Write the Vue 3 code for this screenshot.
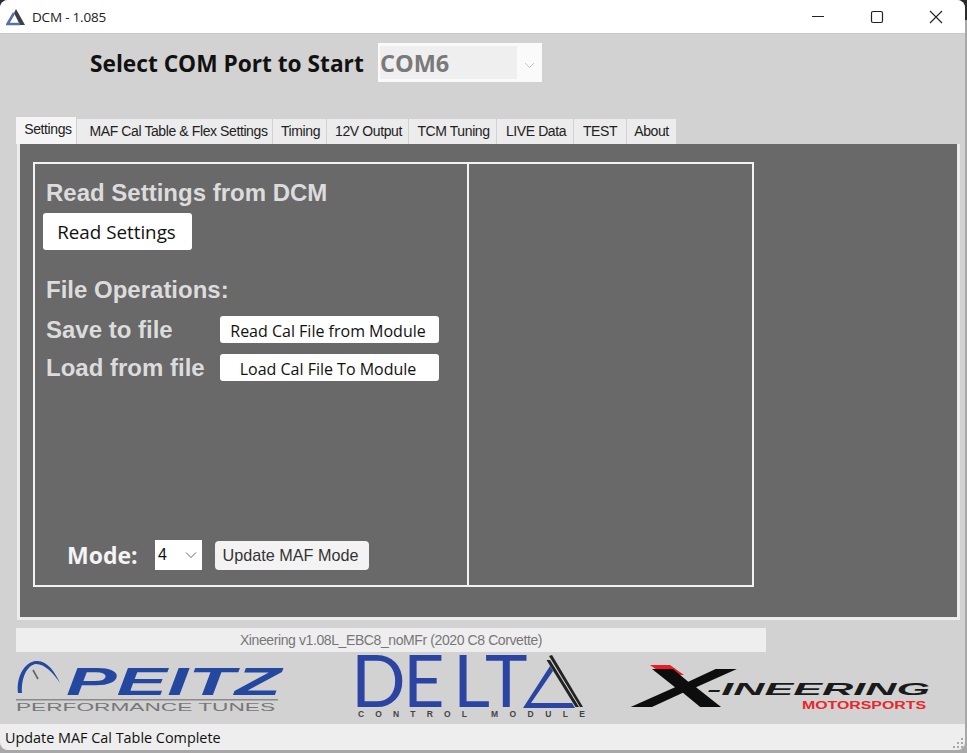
<template>
  <div class="window">
    <header class="titlebar">
      <svg class="app-icon" width="20" height="18" viewBox="0 0 20 18">
        <polygon points="10,1 19,17 14,17 8,5" fill="#3c3f46" />
        <path d="M8 5 L1.5 16 H14" fill="none" stroke="#5a6ea8" stroke-width="2.6" />
      </svg>
      <span class="app-title">DCM - 1.085</span>
      <div class="controls">
        <svg width="46" height="34" viewBox="0 0 46 34"><path d="M17 16.5 H29" stroke="#222" stroke-width="1" /></svg>
        <svg width="46" height="34" viewBox="0 0 46 34"><rect x="17.5" y="11.5" width="11" height="11" rx="1.5" fill="none" stroke="#222" stroke-width="1.2" /></svg>
        <svg width="46" height="34" viewBox="0 0 46 34"><path d="M17 11 L29 23 M29 11 L17 23" stroke="#222" stroke-width="1.1" /></svg>
      </div>
    </header>

    <main class="client">
      <div class="port-row">
        <span class="port-label">Select COM Port to Start</span>
        <div class="combo">
          <span class="combo-value">COM6</span>
          <svg width="24" height="38" viewBox="0 0 24 38"><path d="M8 19 L12.5 23.5 L17 19" fill="none" stroke="#c4c4c4" stroke-width="1" /></svg>
        </div>
      </div>

      <nav class="tabs">
        <span
          v-for="tab in tabs"
          :key="tab.name"
          class="tab"
          :class="{ active: tab.name === 'Settings' }"
          :style="{ width: tab.width + 'px', paddingLeft: tab.pad + 'px' }"
        >{{ tab.name }}</span>
      </nav>

      <section class="panel">
        <div class="group">
          <div class="group-left">
            <h2 class="heading first">Read Settings from DCM</h2>
            <button class="btn-read">Read Settings</button>
            <h2 class="heading ops">File Operations:</h2>
            <div class="file-row row-save">
              <span class="heading file-label">Save to file</span>
              <button class="btn-file">Read Cal File from Module</button>
            </div>
            <div class="file-row row-load">
              <span class="heading file-label">Load from file</span>
              <button class="btn-file">Load Cal File To Module</button>
            </div>
            <div class="mode-row">
              <span class="mode-label">Mode:</span>
              <div class="mode-select">
                <span>4</span>
                <svg width="14" height="10" viewBox="0 0 14 10"><path d="M2 2.5 L7 7.5 L12 2.5" fill="none" stroke="#666" stroke-width="1" /></svg>
              </div>
              <button class="btn-mode">Update MAF Mode</button>
            </div>
          </div>
          <div class="group-right"></div>
        </div>
      </section>

      <div class="version">Xineering v1.08L_EBC8_noMFr (2020 C8 Corvette)</div>

      <div class="logos">
        <svg class="logo-peitz" width="272" height="60" viewBox="0 0 272 60">
          <path d="M3 37 C1 20 10 6 21 5 C32 4 40 16 45 27 C38 17 30 8 21 8 C12 9 6 22 7 37 Z" fill="#24479f" />
          <path d="M18 14 L23 23" stroke="#5b6474" stroke-width="1.6" />
          <text x="51" y="39" class="peitz-name" textLength="215" lengthAdjust="spacingAndGlyphs">PEITZ</text>
          <rect x="1" y="43" width="262" height="1.5" fill="#8a8a8a" />
          <text x="1" y="55" class="peitz-sub" textLength="259" lengthAdjust="spacingAndGlyphs">PERFORMANCE TUNES</text>
        </svg>
        <svg class="logo-delta" width="232" height="66" viewBox="0 0 232 66">
          <text y="52" class="delta-name" x="-4 48 98 130">DELT</text>
          <polygon points="168,53 195,11 198,16 176,48 217,48 220,53" fill="#2b44a2" />
          <polygon points="191.5,5 195,5 224,52 220.5,52" fill="#222" />
          <polygon points="194,1 197,0 228,52 225,52" fill="#222" />
          <text x="3" y="62" class="delta-sub" textLength="109">CONTROL</text>
          <text x="136" y="62" class="delta-sub" textLength="94">MODULE</text>
        </svg>
        <svg class="logo-xin" width="302" height="60" viewBox="0 0 302 60">
          <polygon points="20,3 40,3 54,13 34,13" fill="#ee1c25" />
          <text x="7" y="45" class="xin-x" textLength="93" lengthAdjust="spacingAndGlyphs">X</text>
          <text x="77" y="33" class="xin-name" textLength="223" lengthAdjust="spacingAndGlyphs">-INEERING</text>
          <text x="172" y="47" class="xin-sub" textLength="124" lengthAdjust="spacingAndGlyphs">MOTORSPORTS</text>
        </svg>
      </div>
    </main>

    <footer class="status">
      <span>Update MAF Cal Table Complete</span>
      <svg class="grip" width="14" height="14" viewBox="0 0 14 14" fill="#a8a8a8">
        <rect x="10" y="2" width="2" height="2" /><rect x="6" y="6" width="2" height="2" /><rect x="10" y="6" width="2" height="2" />
        <rect x="2" y="10" width="2" height="2" /><rect x="6" y="10" width="2" height="2" /><rect x="10" y="10" width="2" height="2" />
      </svg>
    </footer>
  </div>
</template>

<script setup>
const tabs = [
  { name: "Settings", width: 60, pad: 4 },
  { name: "MAF Cal Table & Flex Settings", width: 195, pad: 8 },
  { name: "Timing", width: 53, pad: 2 },
  { name: "12V Output", width: 81, pad: 2 },
  { name: "TCM Tuning", width: 87, pad: 2 },
  { name: "LIVE Data", width: 76, pad: 2 },
  { name: "TEST", width: 52, pad: 0 },
  { name: "About", width: 49, pad: 0 },
];
</script>

<style>
html,
body {
  margin: 0;
  background: linear-gradient(#2a2a2a 0 20px, #a8a8a8 20px);
  height: 753px;
  overflow: hidden;
}
</style>

<style scoped>
* {
  box-sizing: border-box;
}

.window {
  width: 965px;
  height: 750px;
  display: flex;
  flex-direction: column;
  border-radius: 8px;
  overflow: hidden;
  background: #d2d2d2;
  font-family: "Open Sans", "Noto Sans", sans-serif;
}

.titlebar {
  height: 34px;
  flex: none;
  display: flex;
  align-items: center;
  padding-left: 6px;
  background: #fff;
  border-bottom: 1px solid #c8c8c8;
}

.app-icon {
  margin-right: 6px;
}

.app-title {
  font-size: 13.5px;
  letter-spacing: -0.2px;
  color: #222;
}

.controls {
  margin-left: auto;
  display: flex;
  margin-right: 6px;
  gap: 13px;
}

.client {
  flex: 1;
  display: flex;
  flex-direction: column;
  min-height: 0;
}

.port-row {
  height: 39px;
  margin-top: 9px;
  display: flex;
  align-items: center;
  padding-left: 90px;
}

.port-label {
  width: 288px;
  padding-top: 2px;
  font-size: 22.7px;
  font-weight: 700;
  color: #111;
  white-space: nowrap;
}

.combo {
  width: 164px;
  height: 39px;
  background: #fafafa;
  padding: 3px 0 3px 2px;
  display: flex;
  align-items: center;
}

.combo-value {
  width: 137px;
  height: 33px;
  background: #efefef;
  color: #7a7a7a;
  font-size: 23.5px;
  font-weight: 700;
  line-height: 34px;
}

.tabs {
  margin: 33px 0 0 16px;
  height: 29px;
  display: flex;
  align-items: flex-end;
  gap: 1px;
}

.tab {
  height: 25px;
  background: #ececec;
  color: #222;
  font-family: "Liberation Sans", sans-serif;
  font-size: 14px;
  letter-spacing: -0.4px;
  text-align: center;
  line-height: 25px;
  white-space: nowrap;
}

.tab.active {
  height: 27px;
  line-height: 24px;
  background: #f5f5f5;
}

.panel {
  margin: 0 5px 0 17px;
  height: 476px;
  background: #696969;
  border: solid #ececec;
  border-width: 0 3px 3px 3px;
  padding: 18px 0 0 13px;
}

.group {
  width: 721px;
  height: 425px;
  display: flex;
  border: 2px solid #f2f2f2;
}

.group-left {
  width: 434px;
  border-right: 2px solid #f2f2f2;
  display: flex;
  flex-direction: column;
  padding-left: 11px;
}

.group-right {
  flex: 1;
}

.heading {
  margin: 0;
  font-family: "Liberation Sans", sans-serif;
  font-size: 24px;
  font-weight: 700;
  color: #dcdcdc;
  white-space: nowrap;
}

.first {
  margin-top: 16px;
  line-height: 26px;
}

button {
  padding: 0;
  border: 0;
  background: #fff;
  color: #111;
  font-family: "Open Sans", "Noto Sans", sans-serif;
}

.btn-read {
  width: 149px;
  height: 37px;
  margin: 7px 0 0 -3px;
  padding-right: 2px;
  font-size: 18.8px;
  border-radius: 3px;
}

.ops {
  margin-top: 27px;
  line-height: 26px;
}

.file-row {
  display: flex;
  align-items: center;
  height: 27px;
}

.row-save {
  margin-top: 13px;
}

.row-load {
  margin-top: 11px;
}

.file-label {
  width: 174px;
  line-height: 26px;
}

.btn-file {
  width: 219px;
  height: 27px;
  padding: 2px 3px 0 0;
  font-size: 16px;
  border-radius: 3px;
}

.mode-row {
  margin-top: auto;
  margin-bottom: 14px;
  padding-left: 21px;
  display: flex;
  align-items: center;
}

.mode-label {
  width: 88px;
  font-size: 23px;
  font-weight: 700;
  color: #f4f4f4;
}

.mode-select {
  width: 47px;
  height: 30px;
  margin-right: 13px;
  padding: 0 4px 0 3px;
  display: flex;
  align-items: center;
  justify-content: space-between;
  background: #fff;
  color: #111;
  font-family: "Liberation Sans", sans-serif;
  font-size: 16px;
}

.btn-mode {
  width: 154px;
  height: 29px;
  padding-right: 3px;
  background: #f3f3f3;
  color: #333;
  font-family: "Liberation Sans", sans-serif;
  font-size: 16.2px;
  border-radius: 4px;
}

.version {
  width: 750px;
  height: 24px;
  margin: 8px 0 0 16px;
  background: #eeeeee;
  color: #777;
  font-family: "Liberation Sans", sans-serif;
  font-size: 14px;
  letter-spacing: -0.4px;
  line-height: 24px;
  text-align: center;
}

.logos {
  flex: 1;
  display: flex;
  align-items: flex-start;
  padding-left: 15px;
}

.logos svg {
  overflow: visible;
}

.logo-peitz {
  margin: 4px 68px 0 0;
}

.logo-delta {
  margin: 3px 43px 0 0;
}

.logo-xin {
  margin-top: 10px;
}

.peitz-name {
  font-family: "Liberation Sans", sans-serif;
  font-style: italic;
  font-weight: 700;
  font-size: 38px;
  fill: #24479f;
}

.peitz-sub {
  font-family: "Liberation Sans", sans-serif;
  font-size: 11px;
  fill: #777;
}

.delta-name {
  font-family: Lato, sans-serif;
  font-weight: 400;
  font-size: 72px;
  fill: #2b44a2;
}

.delta-sub {
  font-family: "Liberation Sans", sans-serif;
  font-size: 8.5px;
  font-weight: 700;
  fill: #444;
}

.xin-x {
  font-family: "Liberation Sans", sans-serif;
  font-style: italic;
  font-weight: 700;
  font-size: 56px;
  fill: #0d0d0d;
}

.xin-name {
  font-family: "Liberation Sans", sans-serif;
  font-style: italic;
  font-weight: 700;
  font-size: 17px;
  fill: #1a1a1a;
}

.xin-sub {
  font-family: "Liberation Sans", sans-serif;
  font-weight: 700;
  font-size: 10px;
  fill: #e8262c;
}

.status {
  height: 26px;
  flex: none;
  margin-top: 2px;
  display: flex;
  align-items: center;
  justify-content: space-between;
  padding: 0 0 0 5px;
  background: #eeeeee;
  color: #111;
  font-size: 14.4px;
}

.grip {
  align-self: flex-end;
}
</style>
